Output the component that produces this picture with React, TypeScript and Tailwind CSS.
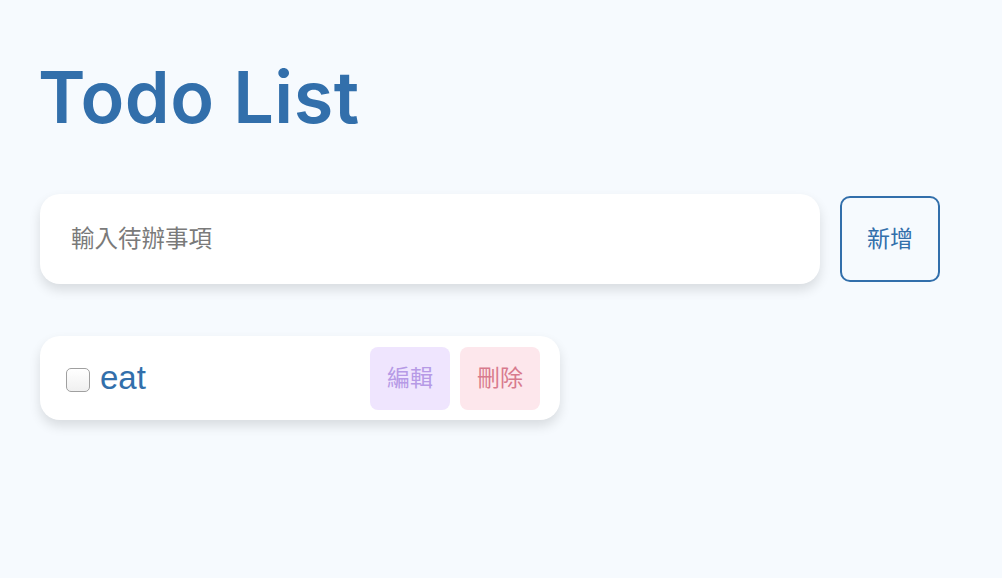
export default function App() {
  return (
    <div className="min-h-[578px] w-full bg-[#f6fafe] px-10 pt-[52px] font-['Liberation_Sans','Noto_Sans_CJK_TC',sans-serif]">
      <h1 className="-ml-[2px] font-['Inter',sans-serif] text-[72px] font-semibold leading-[90px] tracking-[0.5px] text-[#326fab]">
        Todo List
      </h1>

      <div className="mt-[52px] flex items-center gap-5">
        <input
          className="h-[90px] w-[780px] rounded-[20px] bg-white px-[31px] text-[23.5px] text-[#777] shadow-[0_6px_12px_rgba(0,0,0,0.12)] outline-none placeholder:text-[#7a7a7a]"
          placeholder="輸入待辦事項"
        />
        <button className="h-[86px] w-[100px] rounded-[10px] border-2 border-[#326fab] text-[23px] text-[#326fab]">
          新增
        </button>
      </div>

      <div className="mt-[52px] flex h-[84px] w-[520px] items-center rounded-[20px] bg-white pl-[26px] pr-5 shadow-[0_6px_12px_rgba(0,0,0,0.12)]">
        <input
          type="checkbox"
          className="mt-[4px] h-6 w-6 appearance-none rounded-[5px] border border-[#a0a0a0] bg-gradient-to-b from-white to-[#f0f0f0]"
        />
        <span className="ml-[10px] text-[33px] text-[#326fab]">eat</span>
        <div className="ml-auto flex gap-[10px]">
          <button className="h-[63px] w-20 rounded-lg bg-[#efe5fe] text-[23px] text-[#b69ae6]">編輯</button>
          <button className="h-[63px] w-20 rounded-lg bg-[#fde7ec] text-[23px] text-[#d87a8d]">刪除</button>
        </div>
      </div>
    </div>
  );
}
